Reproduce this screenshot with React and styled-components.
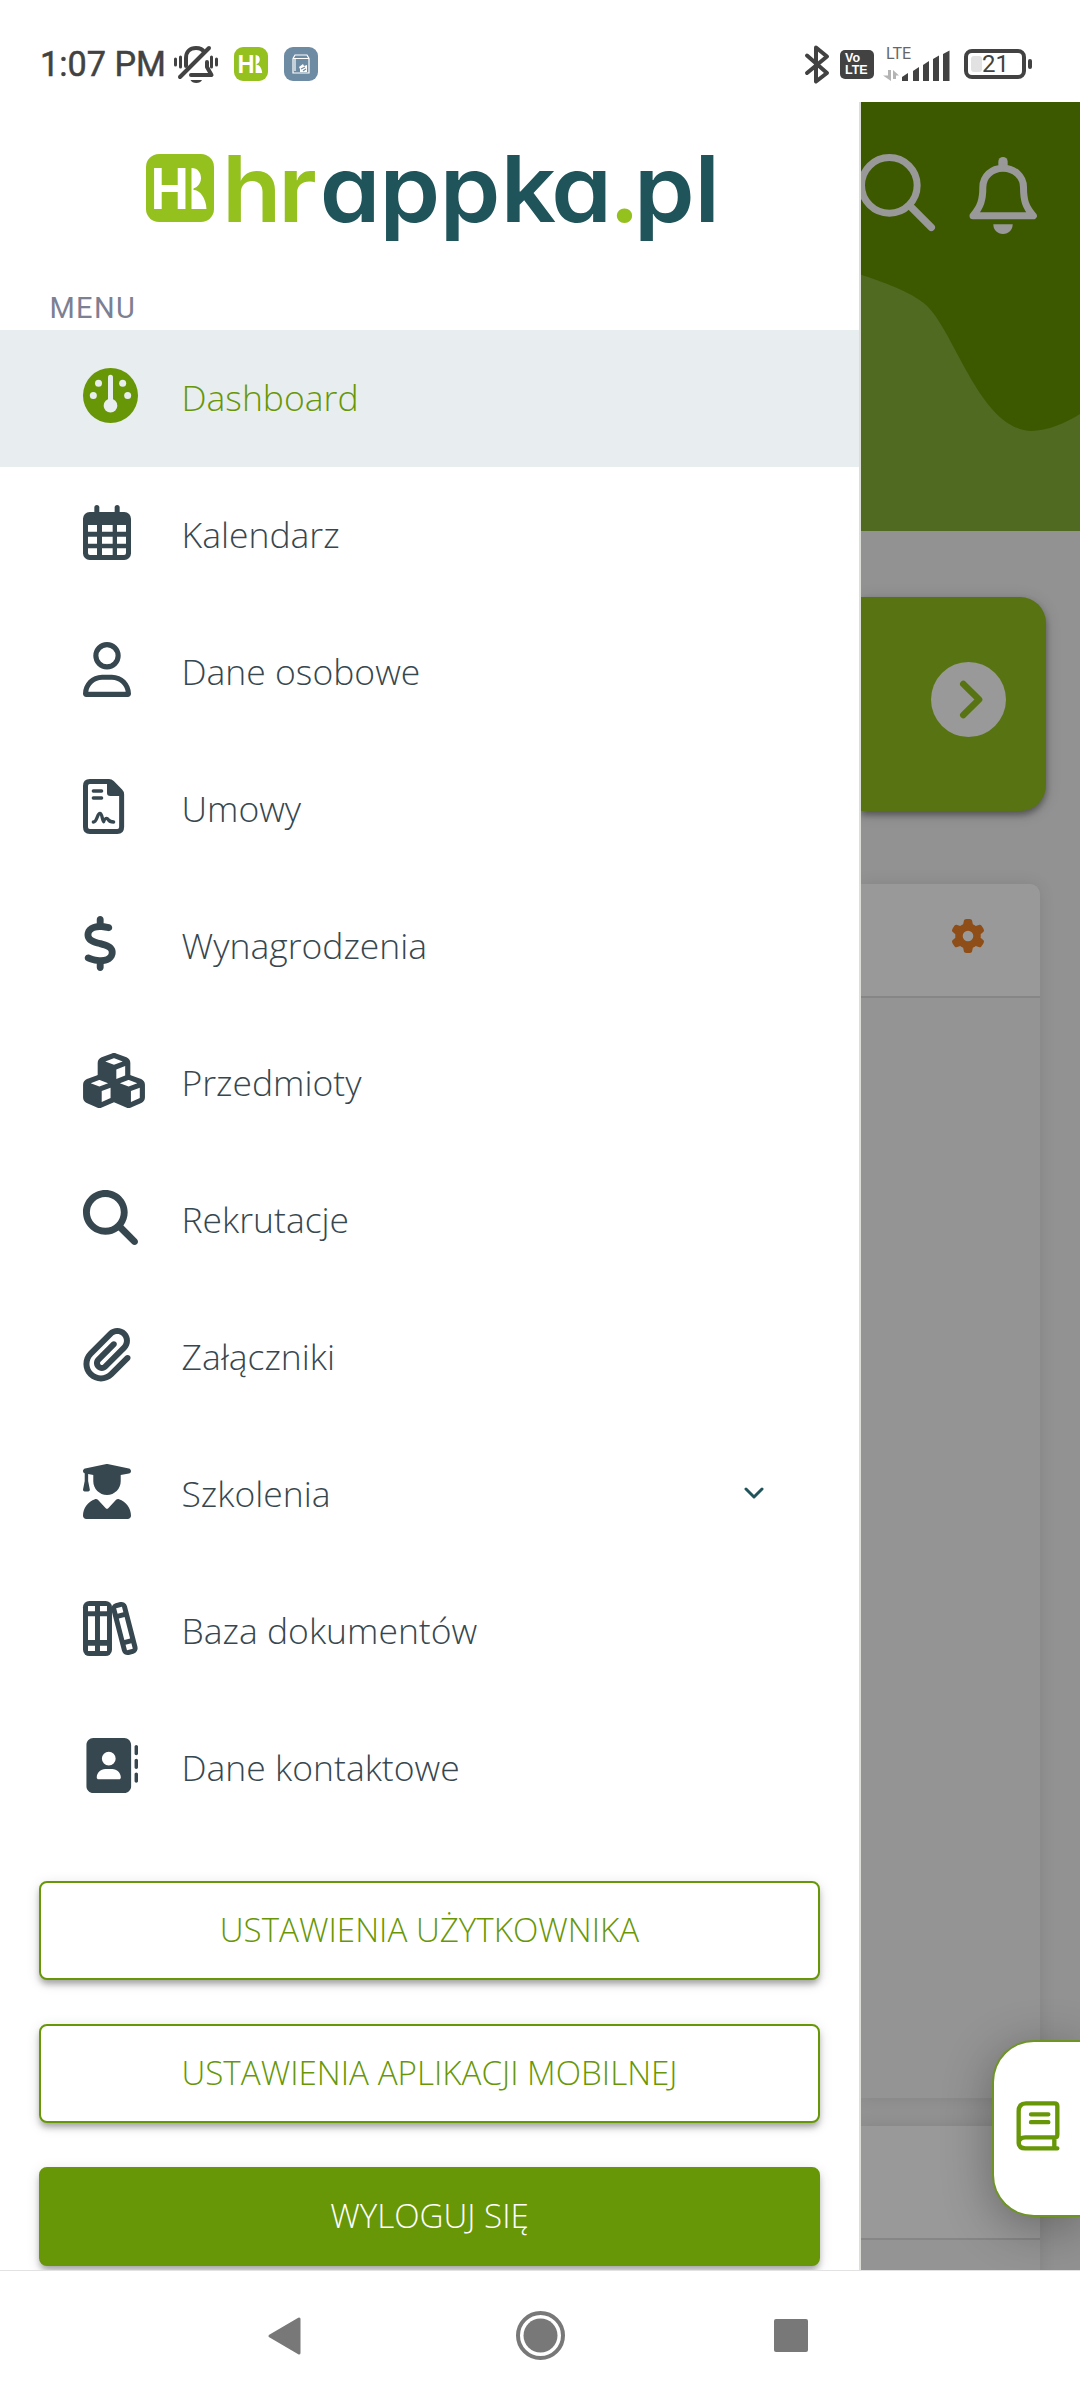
import React from "react";
import styled, { createGlobalStyle } from "styled-components";
import {
  FaRegUser,
  FaDollarSign,
  FaCubes,
  FaMagnifyingGlass,
  FaPaperclip,
  FaUserGraduate,
  FaAddressBook,
  FaGear,
} from "react-icons/fa6";

const colors = {
  green: "#679706",
  lime: "#95c11f",
  teal: "#1f545b",
  slate: "#37474f",
  status: "#424242",
  active: "#e8edef",
};

const GlobalStyle = createGlobalStyle`
  *, *::before, *::after { box-sizing: border-box; }
  body { margin: 0; background: #fff; font-family: "Open Sans", "Noto Sans", sans-serif; }
  svg { display: block; overflow: visible; }
`;

const Screen = styled.div`
  display: flex;
  flex-direction: column;
  width: 1080px;
  height: 2400px;
  overflow: hidden;
  background: #fff;
`;

/* ---------- status bar ---------- */

const StatusBar = styled.header`
  display: flex;
  justify-content: space-between;
  height: 102px;
  padding: 44px 48px 18px 40px;
  font-family: Roboto, sans-serif;
  color: ${colors.status};
`;

const StatusGroup = styled.div`
  display: flex;
  align-items: center;
  height: 40px;
`;

const Clock = styled.span`
  width: 134px;
  font-size: 34.2px;
  font-weight: 400;
  -webkit-text-stroke: 0.5px ${colors.status};
  line-height: 42px;
  white-space: nowrap;
`;

const AppBadge = styled.span`
  display: flex;
  align-items: center;
  justify-content: center;
  width: 34px;
  height: 34px;
  margin-left: 16px;
  border-radius: 9px;
  background: ${(p) => p.$color};
`;

const Volte = styled.span`
  display: flex;
  flex-direction: column;
  justify-content: center;
  width: 34px;
  height: 29px;
  margin: 0 9px 0 10px;
  padding-left: 5px;
  border-radius: 5px;
  background: ${colors.status};
  color: #fff;
  font: 700 12.5px/12.5px "Liberation Sans", sans-serif;
`;

const Signal = styled.div`
  display: flex;
  flex-direction: column;
  width: 68px;
  height: 34px;
`;

const SignalLabel = styled.span`
  height: 12px;
  padding: 1px 0 0 3px;
  font-size: 16px;
  line-height: 12px;
  color: #666;
`;

const SignalRow = styled.div`
  display: flex;
  margin-top: -10px;
`;

const Battery = styled.div`
  display: flex;
  align-items: center;
  width: 62px;
  height: 30px;
  margin-left: 13px;
  padding-left: 3px;
  border: 4px solid ${colors.status};
  border-radius: 8px;
  font-size: 24px;
  line-height: 22px;
`;

const BatteryLevel = styled.span`
  width: 11px;
  height: 16px;
  border-radius: 3px;
  background: #e2e2e2;
`;

const BatteryTip = styled.span`
  width: 4px;
  height: 10px;
  margin-left: 2px;
  border-radius: 2px;
  background: ${colors.status};
`;

/* ---------- drawer ---------- */

const Body = styled.main`
  position: relative;
  display: flex;
  height: 2168px;
  overflow: hidden;
`;

const Drawer = styled.aside`
  display: flex;
  flex-direction: column;
  flex: none;
  width: 861px;
  border-right: 2px solid #dcdfd8;
  background: #fff;
`;

const Brand = styled.div`
  height: 184px;
  padding: 42px 0 0 140px;
`;

const SectionLabel = styled.h2`
  height: 44px;
  margin: 0;
  padding-left: 49.5px;
  font: 400 29px/45px Roboto, sans-serif;
  letter-spacing: 1.3px;
  color: #7d7f92;
`;

const Menu = styled.nav`
  display: flex;
  flex-direction: column;
`;

const MenuItem = styled.a`
  display: flex;
  align-items: flex-start;
  height: 137px;
  padding: 38px 94px 0 83px;
  background: ${(p) => (p.$active ? colors.active : "transparent")};
  color: ${(p) => (p.$active ? colors.green : colors.slate)};
`;

const MenuIcon = styled.span`
  flex: none;
  width: 98.5px;
  svg {
    width: ${(p) => p.$width}px;
    height: 55px;
  }
`;

const MenuLabel = styled.span`
  flex: 1;
  padding-top: 5px;
  font-size: 35.5px;
  font-weight: 300;
  line-height: 48px;
  white-space: nowrap;
`;

const MenuChevron = styled.svg`
  margin-top: 22px;
`;

const Actions = styled.div`
  display: flex;
  flex-direction: column;
  gap: 44px;
  padding: 44px 39px 0;
`;

const ActionButton = styled.button`
  height: 99px;
  padding: 0 0 2px;
  border: 2px solid ${colors.green};
  border-radius: 8px;
  background: ${(p) => (p.$filled ? colors.green : "#fff")};
  color: ${(p) => (p.$filled ? "#fff" : colors.green)};
  box-shadow: 0 5px 6px -1px rgba(0, 0, 0, 0.3), 0 3px 14px rgba(0, 0, 0, 0.12);
  font: 300 33.15px/44px "Open Sans", sans-serif;
`;

/* ---------- dimmed page behind the drawer ---------- */

const Backdrop = styled.section`
  display: flex;
  flex-direction: column;
  flex: 1;
  min-width: 0;
  overflow: hidden;
  background: #929292;
`;

const Hero = styled.div`
  display: grid;
  flex: none;
  height: 429px;
  background: #3d5900;
  > * {
    grid-area: 1 / 1;
  }
`;

const HeroIcons = styled.div`
  display: flex;
  align-items: flex-start;
  gap: 33px;
  margin-left: -3px;
  padding-top: 50px;
  svg:first-child {
    margin-top: 2px;
  }
`;

const Banner = styled.div`
  display: flex;
  align-items: center;
  justify-content: flex-end;
  flex: none;
  height: 214px;
  margin: 66px 34px 0 0;
  padding: 0 40px 9px 0;
  border-radius: 0 26px 26px 0;
  background: #587412;
  box-shadow: 0 4px 6px rgba(0, 0, 0, 0.35), 0 2px 16px rgba(0, 0, 0, 0.15);
`;

const Card = styled.div`
  flex: none;
  height: ${(p) => p.$height}px;
  margin: ${(p) => p.$top}px 40px 0 0;
  border-radius: 0 10px 0 0;
  background: #949494;
  box-shadow: 0 0 16px rgba(0, 0, 0, 0.1);
`;

const CardHeader = styled.div`
  display: flex;
  align-items: center;
  justify-content: flex-end;
  height: 114px;
  padding: 0 55px 8px 0;
  border-bottom: 2px solid #868686;
  border-radius: 0 10px 0 0;
  background: #999;
`;

const HelpTab = styled.button`
  position: absolute;
  top: 1938px;
  right: -2px;
  display: flex;
  align-items: center;
  width: 90px;
  height: 177px;
  padding: 0 0 6px 22px;
  border: 2px solid #6f9426;
  border-right: 0;
  border-radius: 42px 0 0 42px;
  background: #fff;
  box-shadow: 0 10px 50px rgba(0, 0, 0, 0.32);
`;

/* ---------- system navigation ---------- */

const SystemNav = styled.footer`
  display: grid;
  grid-template-columns: 268px 248px 258px 1fr;
  align-items: center;
  height: 130px;
  border-top: 1px solid #e2e2e2;
  svg {
    grid-row: 1;
  }
`;

/* ---------- drawings ---------- */

const Letters = () => (
  <g fill="#fff">
    <text
      transform="translate(-4.2 41) scale(0.9 1)"
      fontFamily="Inter, sans-serif"
      fontWeight="700"
      fontSize="56.5"
    >
      H
    </text>
    <path d="M36.5 0C43 0 46 5 46 10C46 15 43 19 38.500 20.500V22C45 22 51 30 51.500 41H36.500Z" />
  </g>
);

const BrandLogo = () => (
  <svg width="590" height="110" viewBox="140 144 590 110">
    <rect x="146" y="154" width="68" height="68" rx="13" fill={colors.lime} />
    <g transform="translate(155 168)">
      <Letters />
    </g>
    <text
      transform="translate(222 221.500) scale(1.05 1)"
      fontFamily="Inter, sans-serif"
      fontSize="92.500"
      fontWeight="600"
      fill={colors.teal}
      style={{ fontFeatureSettings: '"cv11"' }}
    >
      <tspan x="0 53.5" fill={colors.lime}>hr</tspan>
      <tspan x="93 150 207.500 265.500 313.500">appka</tspan>
      <tspan x="368.500" fill={colors.lime}>.</tspan>
      <tspan x="392.500 450">pl</tspan>
    </text>
  </svg>
);

const MutedBell = () => (
  <svg width="44" height="39" viewBox="0 0 44 39" fill="none" stroke={colors.status} strokeWidth="4" strokeLinecap="round">
    <path d="M12 21V13C12 7 16 3 22 3C26 3 29 5 30 7M33 17V22L37.500 30H17" strokeLinejoin="round" />
    <path d="M35 3L6 32" />
    <path d="M16.500 35H28C26.500 39 18 39 16.500 35Z" fill={colors.status} stroke="none" />
    <path d="M1.500 14V20M6.500 12V22M37.500 12V22M42.500 14V20" strokeWidth="3" />
  </svg>
);

const PackageGlyph = () => (
  <svg width="18" height="20" viewBox="0 0 18 20" fill="none" stroke="#fff" strokeWidth="1.200">
    <path d="M1 4.500L3 1H15L17 4.500V19H1ZM1 4.500H17M3 5V17" />
    <path d="M7 13L11 10L12 12L15 11V18H8V15Z" fill="#fff" stroke="none" />
    <path d="M9 15L13 13M11 17L14 15" stroke="#6d8ba3" />
  </svg>
);

const Bluetooth = () => (
  <svg width="25" height="39" viewBox="0 0 25 39" fill="none" stroke={colors.status} strokeWidth="4" strokeLinecap="round" strokeLinejoin="round">
    <path d="M2 10.500L22 28L11 36.500V2.500L22 11.500L2 28" />
  </svg>
);

const SignalBars = () => (
  <svg width="68" height="32" viewBox="0 0 68 32">
    <g fill="#b4b4b4">
      <path d="M5 21H8V32L0 26.500H5ZM10 32V21L16 26.500H13V30H10Z" />
    </g>
    <g fill={colors.status}>
      <path d="M19 32V28L25 24V32ZM30 32V22L36 18V32ZM40 32V16L46 12V32ZM50 32V10L56 6.500V32ZM60 32V5L66.500 1.500V32Z" />
    </g>
  </svg>
);

const GaugeIcon = () => (
  <svg viewBox="0 0 165 165">
    <circle cx="82.500" cy="82.500" r="82.500" fill="currentColor" />
    <g fill={colors.active}>
      <circle cx="46.500" cy="46" r="10.500" />
      <circle cx="119" cy="46" r="10.500" />
      <circle cx="31" cy="82.500" r="10.500" />
      <circle cx="134" cy="82.500" r="10.500" />
      <circle cx="82.500" cy="113" r="20.500" />
      <rect x="75" y="20.500" width="15" height="95" rx="7.500" />
    </g>
  </svg>
);

const CalendarIcon = () => (
  <svg viewBox="0 0 144 165">
    <g fill="currentColor">
      <rect x="34" y="0" width="15" height="40" rx="7.500" />
      <rect x="95" y="0" width="15" height="40" rx="7.500" />
      <rect y="21" width="144" height="144" rx="20" />
    </g>
    <path
      fill="#fff"
      d="M15 60h27v20h-27zM57 60h32v20h-32zM102 60h27v20h-27zM15 95h27v21h-27zM57 95h32v21h-32zM102 95h27v21h-27zM15 130h27v20h-21q-6 0-6-6zM57 130h32v20h-32zM102 130h27v14q0 6-6 6h-21z"
    />
  </svg>
);

const ContractIcon = () => (
  <svg viewBox="0 0 124 165" fill="none" stroke="currentColor" strokeLinecap="round" strokeLinejoin="round">
    <path strokeWidth="15" d="M20.500 7.500H78Q83 7.500 87 11.500L112 37Q116 41 116 46V144Q116 157.500 103 157.500H20.500Q7.500 157.500 7.500 144V21Q7.500 7.500 20.500 7.500Z" />
    <path d="M72 4V41Q72 51 82 51H118V44L84 6Z" fill="currentColor" stroke="none" />
    <path strokeWidth="10" d="M31 36H56M31 57H56M31 129C43 129 42 103 51 103C58 103 57 123 62 128C65 117 72 116 76 122C80 129 86 129 92 129" />
  </svg>
);

const BooksIcon = () => (
  <svg viewBox="0 0 166 165">
    <rect width="87" height="165" rx="19" fill="currentColor" />
    <path fill="#fff" d="M15 15h21v16h-21zM51 15h21v16h-21zM15 46h21v71h-21zM51 46h21v71h-21zM15 134h21v16h-21zM51 134h21v16h-21z" />
    <g transform="translate(124.500 82.500) rotate(-14.500)">
      <rect x="-24" y="-80" width="48" height="160" rx="17" fill="currentColor" />
      <path fill="#fff" d="M-9-65h18v17h-18zM-9-33h18v66h-18zM-9 48h18v17h-18z" />
    </g>
  </svg>
);

const Wave = () => (
  <svg width="219" height="429" viewBox="63 6 657 1287" preserveAspectRatio="none">
    <path fill="#516a22" d="M63 524C120 543 215 575 258 615C345 695 420 990 575 993C620 993 680 968 720 942V1293H63Z" />
  </svg>
);

const HeroSearch = () => (
  <svg width="78" height="78" viewBox="54 162 234 234" fill="none" stroke="#999" strokeLinecap="round">
    <circle cx="148" cy="256" r="83.500" strokeWidth="21" />
    <path d="M212 320L274 382" strokeWidth="22" />
  </svg>
);

const HeroBell = () => (
  <svg width="68" height="84" viewBox="387 156 204 252" fill="none" stroke="#999" strokeLinejoin="round">
    <rect x="475" y="171" width="28" height="36" rx="14" fill="#999" stroke="none" />
    <path strokeWidth="21" d="M399 347.500C422 320 428.500 300 428.500 262C428.500 229 455 204.500 489 204.500C523 204.500 550.500 229 550.500 262C550.500 300 556 320 580 347.500Z" />
    <path d="M460 373H518C518 390 506 402 489 402C472 402 460 390 460 373Z" fill="#999" stroke="none" />
  </svg>
);

const BannerArrow = () => (
  <svg width="75" height="75" viewBox="0 0 225 225" fill="none">
    <circle cx="112.500" cy="112.500" r="112.500" fill="#999" />
    <path d="M97 66L144 112.500L97 159" stroke="#587412" strokeWidth="20" strokeLinecap="round" strokeLinejoin="round" />
  </svg>
);

const ManualIcon = () => (
  <svg width="44" height="50" viewBox="529 302 132 150" fill="none" stroke={colors.green} strokeWidth="13" strokeLinecap="round" strokeLinejoin="round">
    <path d="M537 429V333Q537 309 559 309H645Q653 309 653 317V403Q653 411 645 411H557Q538 411 537 428Q538 444 557 444H653M644 412V443" />
    <path d="M574 342H626M574 365.500H626" />
  </svg>
);

const menuItems = [
  { label: "Dashboard", icon: GaugeIcon, width: 55, active: true },
  { label: "Kalendarz", icon: CalendarIcon, width: 48 },
  { label: "Dane osobowe", icon: FaRegUser, width: 48 },
  { label: "Umowy", icon: ContractIcon, width: 41.3 },
  { label: "Wynagrodzenia", icon: FaDollarSign, width: 34.4 },
  { label: "Przedmioty", icon: FaCubes, width: 62 },
  { label: "Rekrutacje", icon: FaMagnifyingGlass, width: 55 },
  { label: "Załączniki", icon: FaPaperclip, width: 48 },
  { label: "Szkolenia", icon: FaUserGraduate, width: 48, expandable: true },
  { label: "Baza dokumentów", icon: BooksIcon, width: 55.3 },
  { label: "Dane kontaktowe", icon: FaAddressBook, width: 55 },
];

export default function App() {
  return (
    <Screen>
      <GlobalStyle />
      <StatusBar>
        <StatusGroup>
          <Clock>1:07 PM</Clock>
          <MutedBell />
          <AppBadge $color={colors.lime}>
            <svg width="24" height="18" viewBox="0 0 52 41">
              <Letters />
            </svg>
          </AppBadge>
          <AppBadge $color="#6d8ba3">
            <PackageGlyph />
          </AppBadge>
        </StatusGroup>
        <StatusGroup>
          <Bluetooth />
          <Volte>
            <span>Vo</span>
            <span>LTE</span>
          </Volte>
          <Signal>
            <SignalLabel>LTE</SignalLabel>
            <SignalRow>
              <SignalBars />
            </SignalRow>
          </Signal>
          <Battery>
            <BatteryLevel />
            21
          </Battery>
          <BatteryTip />
        </StatusGroup>
      </StatusBar>

      <Body>
        <Drawer>
          <Brand>
            <BrandLogo />
          </Brand>
          <SectionLabel>MENU</SectionLabel>
          <Menu>
            {menuItems.map(({ label, icon: Icon, width, active, expandable }) => (
              <MenuItem key={label} $active={active}>
                <MenuIcon $width={width}>
                  <Icon />
                </MenuIcon>
                <MenuLabel>{label}</MenuLabel>
                {expandable && (
                  <MenuChevron width="22" height="14" viewBox="0 0 22 14" fill="none" stroke={colors.teal} strokeWidth="3" strokeLinecap="round" strokeLinejoin="round">
                    <path d="M3 3L11 11L19 3" />
                  </MenuChevron>
                )}
              </MenuItem>
            ))}
          </Menu>
          <Actions>
            <ActionButton>USTAWIENIA UŻYTKOWNIKA</ActionButton>
            <ActionButton>USTAWIENIA APLIKACJI MOBILNEJ</ActionButton>
            <ActionButton $filled>WYLOGUJ SIĘ</ActionButton>
          </Actions>
        </Drawer>

        <Backdrop>
          <Hero>
            <Wave />
            <HeroIcons>
              <HeroSearch />
              <HeroBell />
            </HeroIcons>
          </Hero>
          <Banner>
            <BannerArrow />
          </Banner>
          <Card $top={73} $height={1214}>
            <CardHeader>
              <FaGear size={34} color="#8f4e17" />
            </CardHeader>
          </Card>
          <Card $top={28} $height={160}>
            <CardHeader />
          </Card>
        </Backdrop>
        <HelpTab>
          <ManualIcon />
        </HelpTab>
      </Body>

      <SystemNav>
        <svg width="33" height="38" viewBox="0 0 33 38" style={{ gridColumn: 2 }}>
          <path d="M31 2V36L2 19Z" fill="#787878" stroke="#787878" strokeWidth="3" strokeLinejoin="round" />
        </svg>
        <svg width="49" height="49" viewBox="0 0 49 49" style={{ gridColumn: 3 }}>
          <circle cx="24.500" cy="24.500" r="22.500" fill="none" stroke="#787878" strokeWidth="4" />
          <circle cx="24.500" cy="24.500" r="17" fill="#787878" />
        </svg>
        <svg width="34" height="33" viewBox="0 0 34 33" style={{ gridColumn: 4 }}>
          <rect width="34" height="33" rx="2" fill="#787878" />
        </svg>
      </SystemNav>
    </Screen>
  );
}
